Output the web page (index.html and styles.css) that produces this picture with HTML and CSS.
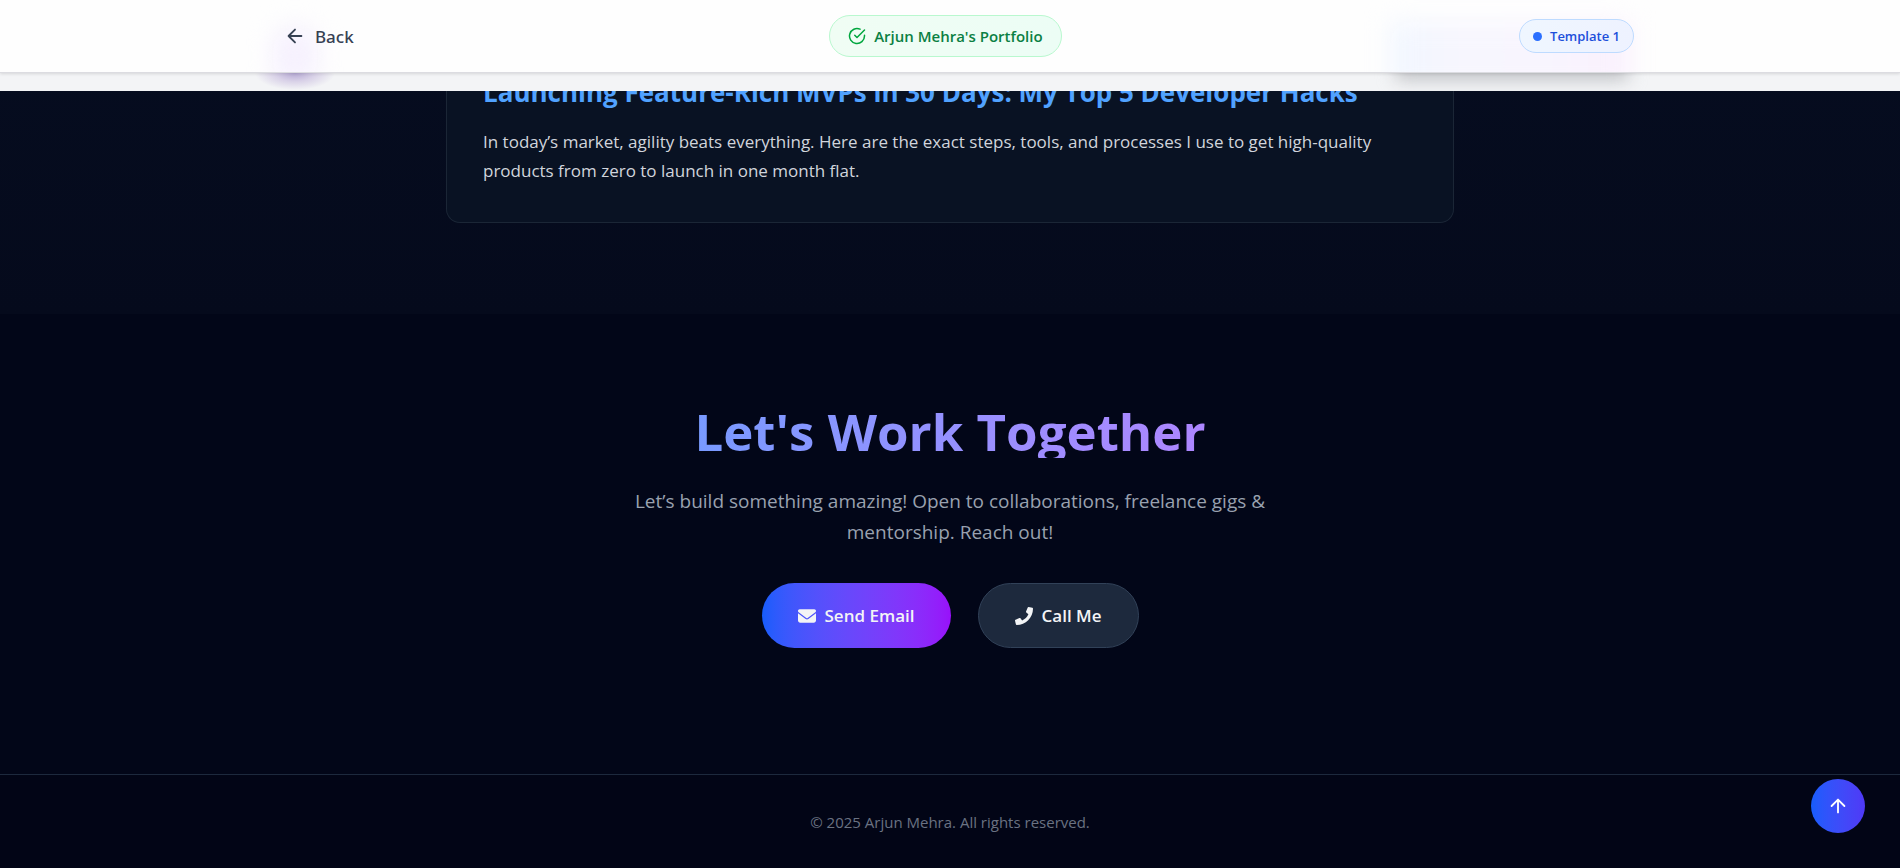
FILE: index.html
```html
<!DOCTYPE html>
<html lang="en">
<head>
<meta charset="utf-8">
<title>Arjun Mehra's Portfolio</title>
<link rel="stylesheet" href="styles.css">
</head>
<body>
<header class="topbar">
  <div class="topbar-main">
    <div class="topbar-inner">
      <button class="back" type="button">
        <svg class="icon-md" viewBox="0 0 24 24" fill="none" stroke="currentColor" stroke-width="2" stroke-linecap="round" stroke-linejoin="round"><path d="m12 19-7-7 7-7M19 12H5"/></svg>
        Back
      </button>
      <div class="pill pill-green">
        <svg class="icon-sm" viewBox="0 0 24 24" fill="none" stroke="currentColor" stroke-width="2" stroke-linecap="round" stroke-linejoin="round"><path d="M22 11.08V12a10 10 0 1 1-5.93-9.14"/><path d="m9 11 3 3L22 4"/></svg>
        <span>Arjun Mehra's Portfolio</span>
      </div>
      <div class="pill pill-blue"><span class="dot"></span><span>Template 1</span></div>
    </div>
  </div>
  <div class="topbar-sub"><div class="topbar-shade"></div></div>
</header>
<main>
  <section class="blog">
    <article class="card">
      <h3>Launching Feature-Rich MVPs in 30 Days: My Top 5 Developer Hacks</h3>
      <p>In today’s market, agility beats everything. Here are the exact steps, tools, and processes I use to get high-quality products from zero to launch in one month flat.</p>
    </article>
  </section>
  <section class="contact">
    <h2>Let's Work Together</h2>
    <p>Let’s build something amazing! Open to collaborations, freelance gigs &amp; mentorship. Reach out!</p>
    <div class="actions">
      <a class="btn btn-primary" href="#email">
        <svg class="icon-sm" viewBox="0 0 512 512" fill="currentColor"><path d="M48 64C21.500 64 0 85.500 0 112c0 15.100 7.100 29.300 19.200 38.400L236.800 313.600c11.400 8.500 27 8.500 38.400 0L492.800 150.400c12.100-9.100 19.200-23.300 19.200-38.400c0-26.500-21.500-48-48-48L48 64zM0 176L0 384c0 35.300 28.700 64 64 64l384 0c35.300 0 64-28.700 64-64l0-208L294.400 339.200c-22.800 17.100-54 17.100-76.800 0L0 176z"/></svg>
        Send Email
      </a>
      <a class="btn btn-dark" href="#call">
        <svg class="icon-sm" viewBox="0 0 512 512" fill="currentColor"><path d="M493.400 24.600l-104-24c-11.300-2.600-22.900 3.300-27.500 13.900l-48 112c-4.200 9.800-1.400 21.300 6.900 28l60.600 49.600c-36 76.700-98.900 140.500-177.200 177.200l-49.600-60.600c-6.800-8.300-18.200-11.100-28-6.900l-112 48C3.900 366.500-2 378.100.600 389.400l24 104C27.100 504.200 36.700 512 48 512c256.100 0 464-207.500 464-464 0-11.200-7.700-20.900-18.600-23.400z"/></svg>
        Call Me
      </a>
    </div>
  </section>
</main>
<footer class="footer"><p>© 2025 Arjun Mehra. All rights reserved.</p></footer>
<button class="to-top" type="button" aria-label="Back to top">
  <svg class="icon-md" viewBox="0 0 24 24" fill="none" stroke="currentColor" stroke-width="2" stroke-linecap="round" stroke-linejoin="round"><path d="m5 12 7-7 7 7M12 19V5"/></svg>
</button>
</body>
</html>
```
FILE: styles.css
```css
* { box-sizing: border-box; margin: 0; }
body {
  min-height: 100vh;
  display: flex;
  flex-direction: column;
  background: #020618;
  color: #d1d5dc;
  font: 17px/27px "Open Sans", "Noto Sans", sans-serif;
}
button { font: inherit; border: 0; cursor: pointer; }
a { text-decoration: none; }
svg { display: block; flex: none; }
.icon-sm { width: 18px; height: 18px; }
.icon-md { width: 22px; height: 22px; }

.topbar { position: fixed; top: 0; left: 0; right: 0; z-index: 10; background: #f3f4f6; }
.topbar-main {
  position: relative;
  z-index: 1;
  border-bottom: 1px solid #dcdce1;
  background: #fefefe;
  box-shadow: 0 1px 3px #0000001f;
}
.topbar-inner {
  position: relative;
  z-index: 0;
  overflow: hidden;
  display: flex;
  align-items: center;
  justify-content: space-between;
  max-width: 1440px;
  height: 72px;
  margin: 0 auto;
  padding: 0 36px;
}
/* soft colour haze behind the bar's two ends */
.topbar-inner::before, .topbar-inner::after {
  content: "";
  position: absolute;
  z-index: -1;
  filter: blur(12px);
}
.topbar-inner::before { left: 42px; top: 26px; width: 46px; height: 60px; border-radius: 20px; background: #f6f1fe; }
.topbar-inner::after { right: 40px; top: 22px; width: 240px; height: 70px; background: linear-gradient(90deg, #f1f7ff, #f7f6fe 30%, #f8f5fe 65%, #faf0fd); }
.topbar-sub {
  height: 18px;
  overflow: hidden;
  background: #f3f4f6;
}
.topbar-shade {
  position: relative;
  max-width: 1440px;
  height: 18px;
  margin: 0 auto;
  background: radial-gradient(ellipse 40px 17px at 65px 0, #b5a8d4, #d9d2e8 50%, transparent);
}
.topbar-shade::after {
  content: "";
  position: absolute;
  right: 42px;
  top: -14px;
  width: 232px;
  height: 20px;
  background: #bcbec2;
  filter: blur(9px);
}
.back { display: flex; align-items: center; gap: 9px; padding: 9px 18px; background: none; color: #364153; font-family: "Noto Sans", sans-serif; font-weight: 500; }
.pill { display: flex; align-items: center; border: 1px solid; border-radius: 99px; }
.pill span { white-space: nowrap; }
.pill-green {
  gap: 8px; padding: 7px 18px;
  border-color: #b9f8cf;
  background: linear-gradient(90deg, #f0fdf4, #ecfdf5);
  color: #00a63e; font-size: 15px; line-height: 26px; font-weight: 600;
}
.pill-green span { color: #0b8043; }
.pill-blue {
  gap: 8px; padding: 5px 13px;
  border-color: #bedbff;
  background: linear-gradient(90deg, #eff6ff, #eef2ff);
  color: #1d4fdb; font-size: 13px; line-height: 22px; font-weight: 600;
}
.dot { width: 9px; height: 9px; border-radius: 50%; background: #2b6fff; }

.blog { padding: 0 36px 91px; background: linear-gradient(#060d20, #050a1c); }
.card {
  max-width: 1008px;
  margin: 0 auto;
  padding: 74px 36px 37px;
  border: 1px solid #1b2636;
  border-top: 0;
  border-radius: 0 0 14px 14px;
  background: #091223;
}
.card h3 { margin-bottom: 17px; color: #51a2ff; font-size: 26px; line-height: 36px; }
.card p { line-height: 29px; }

.contact { padding: 90px 36px 126px; text-align: center; background: #020618; }
.contact h2 {
  max-width: 1008px;
  margin: 0 auto 28px;
  background: linear-gradient(90deg in oklab, #51a2ff, #c27aff);
  background-clip: text;
  color: transparent;
  font-size: 51px;
  line-height: 54px;
}
.contact p { max-width: 700px; margin: 0 auto 35px; color: #99a1af; font-size: 19px; line-height: 31px; }
.actions { display: flex; flex-wrap: wrap; justify-content: center; gap: 27px; }
.btn { display: flex; align-items: center; gap: 9px; padding: 18px 36px; border-radius: 99px; color: #f3f4f6; font-weight: 600; line-height: 29px; }
.btn-primary { background: linear-gradient(90deg in oklab, #155dfc, #9810fa); }
.btn-dark { padding: 17px 36px; border: 1px solid #314158; background: #1d293d; }

.footer { flex: 1; padding: 34px 36px; border-top: 1px solid #1d293d; background: #020516; color: #6a7282; text-align: center; font-size: 15px; }
.to-top {
  position: fixed; right: 35px; bottom: 35px;
  display: grid; place-items: center;
  width: 54px; height: 54px; padding: 0;
  border-radius: 50%;
  background: linear-gradient(90deg in oklab, #155dfc, #4f39f6);
  color: #fff;
}
```
